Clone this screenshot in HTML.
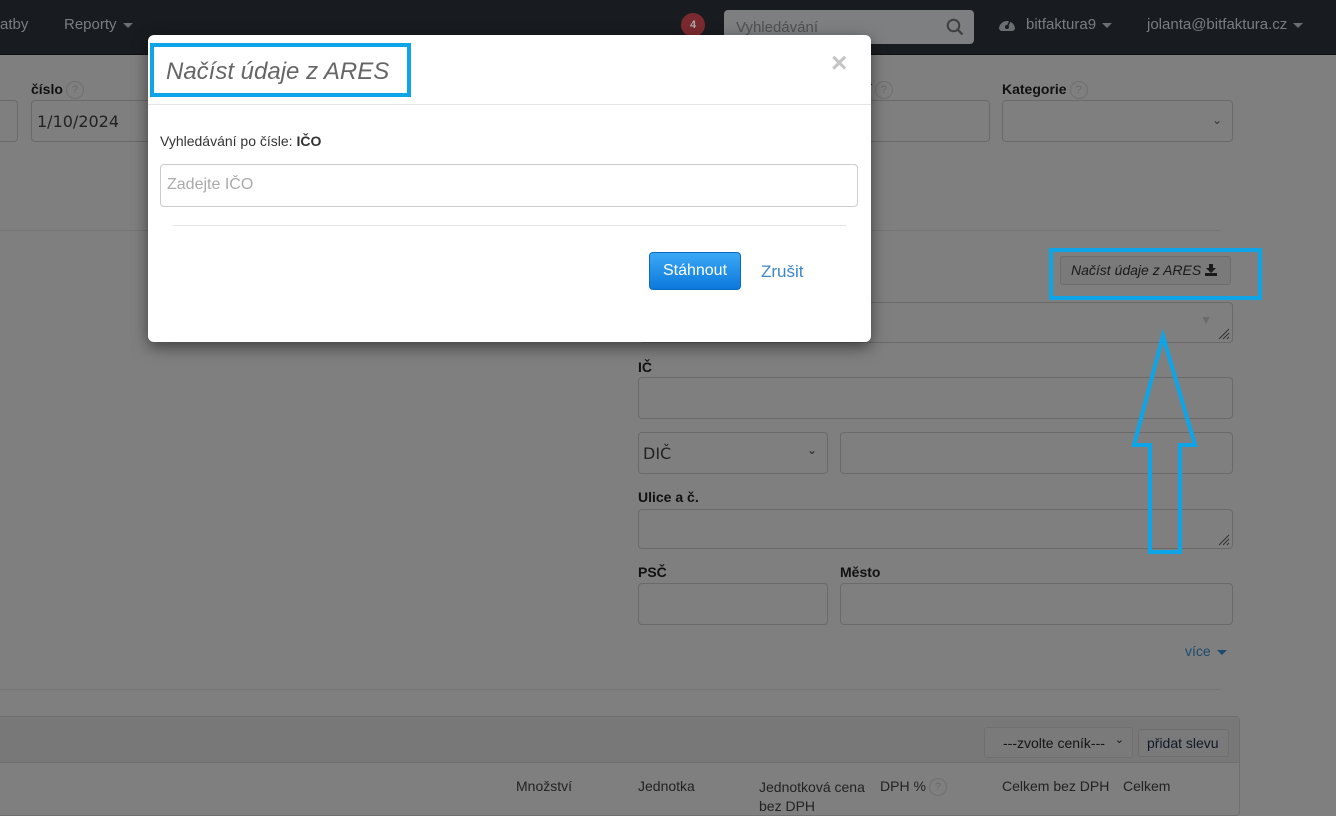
<!DOCTYPE html>
<html><head><meta charset="utf-8"><style>
*{box-sizing:border-box;margin:0;padding:0}
body{width:1336px;height:808px;overflow:hidden;background:#7f7f7f;font-family:"Liberation Sans",Arial,sans-serif;position:relative;color:#111}
.a{position:absolute}
.nav{left:0;top:0;width:1336px;height:55px;background:#181b1f;border-bottom:1px solid #0d0f11}
.nt{color:#7a7d80;font-size:15px}
.car{display:inline-block;width:0;height:0;border-left:5px solid transparent;border-right:5px solid transparent;border-top:5px solid #6c6f72;vertical-align:middle;margin-left:6px}
.inp{border:1px solid #6a6a6a;border-radius:4px;background:#7f7f7f}
.lbl{font-weight:bold;font-size:14px;color:#111}
.q{display:inline-block;width:18px;height:18px;border:1px solid #707070;border-radius:50%;font-size:11px;color:#6a6a6a;text-align:center;line-height:16px;font-weight:normal;vertical-align:middle;margin-left:3px}
.hr{height:1px;background:#747474}
.th{font-size:14px;color:#222}
.rs{position:absolute;right:2px;bottom:2px}
</style></head><body>
<div class="a nav"></div>
<div class="a nt" style="left:0;top:16px">atby</div>
<div class="a nt" style="left:64px;top:16px">Reporty<span class="car"></span></div>
<div class="a" style="left:681px;top:13px;width:24px;height:24px;border-radius:50%;background:#7a2a2e;color:#aaa;font-size:11px;font-weight:bold;text-align:center;line-height:24px">4</div>
<div class="a" style="left:724px;top:10px;width:250px;height:34px;border-radius:4px;background:#7d7f81;color:#4e5052;font-size:15px;padding:9px 12px">Vyhledávání
<svg class="a" style="right:10px;top:8px" width="18" height="18" viewBox="0 0 18 18"><circle cx="7.5" cy="7.5" r="5.8" fill="none" stroke="#3d3f41" stroke-width="2"/><line x1="11.8" y1="11.8" x2="16.5" y2="16.5" stroke="#3d3f41" stroke-width="2.2"/></svg></div>
<svg class="a" style="left:998px;top:16px" width="18" height="16" viewBox="0 0 18 16"><path d="M1 13A8 8 0 0 1 17 13L15 15H3Z" fill="#6c6f72"/><circle cx="9" cy="11" r="2" fill="#181b1f"/><line x1="9" y1="11" x2="12" y2="5" stroke="#181b1f" stroke-width="1.5"/></svg>
<div class="a nt" style="left:1026px;top:16px">bitfaktura9<span class="car"></span></div>
<div class="a nt" style="left:1147px;top:16px">jolanta@bitfaktura.cz<span class="car"></span></div>

<div class="a lbl" style="left:31px;top:81px">číslo<span class="q">?</span></div>
<div class="a inp" style="left:-10px;top:100px;width:28px;height:42px"></div>
<div class="a inp" style="left:31px;top:100px;width:130px;height:42px;font-family:'DejaVu Sans','Liberation Sans',sans-serif;font-size:16px;color:#222;padding:11px 5px">1/10/2024</div>
<div class="a lbl" style="left:868px;top:81px">í<span class="q">?</span></div>
<div class="a inp" style="left:840px;top:100px;width:150px;height:42px"></div>
<div class="a lbl" style="left:1002px;top:81px">Kategorie<span class="q">?</span></div>
<div class="a inp" style="left:1002px;top:100px;width:231px;height:42px"><span class="a" style="right:10px;top:12px;font-size:12px;color:#333">⌄</span></div>
<div class="a hr" style="left:0;top:230px;width:1220px"></div>
<div class="a" style="left:1060px;top:256px;width:171px;height:29px;border:1px solid #6d6d6d;border-radius:3px;background:#7a7a7a;font-style:italic;font-size:14px;color:#1a1a1a;padding:5px 10px;white-space:nowrap">Načíst údaje z ARES <svg width="12" height="12" viewBox="0 0 12 12" style="vertical-align:-1px"><path d="M4 0H8V4H11L6 9L1 4H4Z" fill="#1a1a1a"/><rect x="0" y="9" width="12" height="3" fill="#1a1a1a"/></svg></div>
<div class="a inp" style="left:640px;top:302px;width:593px;height:41px"><span class="a" style="right:20px;top:10px;color:#6a6a6a;font-size:12px">▼</span><svg class="rs" width="14" height="14"><path d="M13 3L3 13M13 7L7 13M13 11L11 13" stroke="#333" stroke-width="1"/></svg></div>
<div class="a lbl" style="left:638px;top:359px">IČ</div>
<div class="a inp" style="left:638px;top:377px;width:595px;height:42px"></div>
<div class="a inp" style="left:638px;top:432px;width:190px;height:42px;font-family:'DejaVu Sans','Liberation Sans',sans-serif;font-size:16px;color:#222;padding:11px 4px">DIČ<span class="a" style="right:10px;top:10px;font-size:12px">⌄</span></div>
<div class="a inp" style="left:840px;top:432px;width:393px;height:42px"></div>
<div class="a lbl" style="left:638px;top:489px">Ulice a č.</div>
<div class="a inp" style="left:638px;top:509px;width:595px;height:40px"><svg class="rs" width="14" height="14"><path d="M13 3L3 13M13 7L7 13M13 11L11 13" stroke="#333" stroke-width="1"/></svg></div>
<div class="a lbl" style="left:638px;top:564px">PSČ</div>
<div class="a lbl" style="left:840px;top:564px">Město</div>
<div class="a inp" style="left:638px;top:583px;width:190px;height:42px"></div>
<div class="a inp" style="left:840px;top:583px;width:393px;height:42px"></div>
<div class="a" style="left:1185px;top:643px;font-size:14px;color:#1d4a6e">více<span class="car" style="border-top-color:#1d4a6e"></span></div>
<div class="a hr" style="left:0;top:689px;width:1220px"></div>
<div class="a" style="left:-5px;top:716px;width:1245px;height:100px;border:1px solid #6f6f6f;border-radius:4px"></div>
<div class="a" style="left:-5px;top:717px;width:1244px;height:46px;background:#787878;border-bottom:1px solid #6f6f6f"></div>
<div class="a" style="left:984px;top:727px;width:149px;height:31px;border:1px solid #6f6f6f;border-radius:3px;background:#7a7a7a;font-size:14px;color:#151515;padding:7px 0 0 18px;white-space:nowrap">---zvolte ceník---<span class="a" style="right:8px;top:5px;font-size:11px">⌄</span></div>
<div class="a" style="left:1138px;top:729px;width:91px;height:28px;border:1px solid #6f6f6f;border-radius:3px;background:#7a7a7a;font-size:14px;color:#101828;padding:5px 8px;white-space:nowrap">přidat slevu</div>
<div class="a th" style="left:516px;top:778px">Množství</div>
<div class="a th" style="left:638px;top:778px">Jednotka</div>
<div class="a th" style="left:759px;top:778px;line-height:19px">Jednotková cena<br>bez DPH</div>
<div class="a th" style="left:880px;top:778px">DPH %<span class="q">?</span></div>
<div class="a th" style="left:1002px;top:778px">Celkem bez DPH</div>
<div class="a th" style="left:1123px;top:778px">Celkem</div>

<div class="a" style="left:1049px;top:248px;width:213px;height:52px;border:4px solid #0ea5e8"></div>
<svg class="a" style="left:1125px;top:328px" width="80" height="232" viewBox="1125 328 80 232"><path d="M1163 336L1134 445H1150V552H1180V445H1195Z" fill="none" stroke="#0ea5e8" stroke-width="4"/></svg>

<div class="a" style="left:148px;top:35px;width:723px;height:307px;background:#fff;border-radius:6px;box-shadow:0 5px 15px rgba(0,0,0,.5)">
 <div class="a" style="left:2px;top:8px;width:261px;height:54px;border:4px solid #0ea5e8;font-style:italic;font-size:24px;color:#666;padding:11px 12px">Načíst údaje z ARES</div>
 <div class="a" style="left:683px;top:14px;font-size:28px;font-weight:bold;color:#c4c4c4;line-height:1">×</div>
 <div class="a" style="left:0;top:69px;width:723px;height:1px;background:#e5e5e5"></div>
 <div class="a" style="left:12px;top:98px;font-size:14px;color:#333">Vyhledávání po čísle: <b>IČO</b></div>
 <div class="a" style="left:12px;top:129px;width:698px;height:43px;border:1px solid #ccc;border-radius:4px;font-size:16px;color:#aaa;padding:11px 6px">Zadejte IČO</div>
 <div class="a" style="left:25px;top:190px;width:673px;height:1px;background:#e5e5e5"></div>
 <div class="a" style="left:501px;top:217px;width:92px;height:38px;border-radius:4px;background:linear-gradient(#3ba8f5,#0c79dd);border:1px solid #0a6bc4;color:#fff;font-size:16px;text-align:center;line-height:36px">Stáhnout</div>
 <div class="a" style="left:613px;top:227px;font-size:17px;color:#3b86c8">Zrušit</div>
</div>
</body></html>
